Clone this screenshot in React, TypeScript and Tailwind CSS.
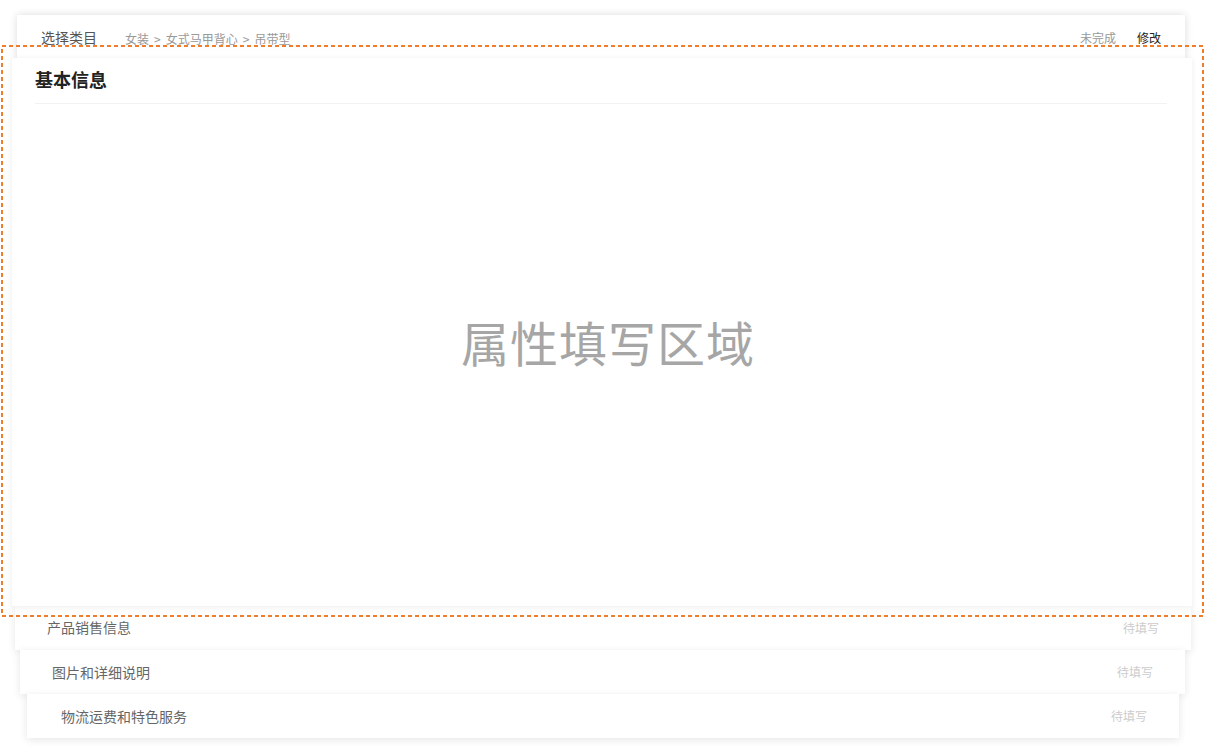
export default function App() {
  const font = { fontFamily: '"Noto Sans CJK SC", "Noto Sans", sans-serif' }
  const steps = [
    { title: '产品销售信息', box: 'ml-[15px] w-[1176px] h-[45px] mt-[-12px] pl-[32px]' },
    { title: '图片和详细说明', box: 'ml-[20px] w-[1165px] h-[44px] pl-[32px]' },
    { title: '物流运费和特色服务', box: 'ml-[27px] w-[1152px] h-[44px] pl-[34px]' },
  ]

  return (
    <div className="w-[1205px] h-[753px] bg-white pt-[15px] overflow-hidden" style={font}>
      {/* 选择类目 */}
      <div className="ml-[17px] w-[1168px] h-[45px] bg-white shadow-[0_0_8px_rgba(0,0,0,0.14)] flex items-center px-[24px]">
        <span className="text-[14px] text-[#555]">选择类目</span>
        <span className="ml-[28px] mt-[3px] text-[12px] text-[#999] flex items-center">
          女装<span className="mx-[5px]">&gt;</span>女式马甲背心<span className="mx-[5px]">&gt;</span>吊带型
        </span>
        <span className="ml-auto text-[12px] text-[#999]">未完成</span>
        <span className="ml-[21px] text-[12px] text-[#222]">修改</span>
      </div>

      {/* 基本信息 */}
      <div className="relative z-10 mt-[-15px] ml-[1px] w-[1203px] h-[572px] pt-[13px] pl-[11px]">
        <svg className="absolute inset-0 pointer-events-none" width="1203" height="572">
          <rect x="1" y="1" width="1201" height="570" fill="none" stroke="#ef7d2c" strokeWidth="2" strokeDasharray="4 3" />
        </svg>
        <div className="w-[1180px] h-[548px] bg-white shadow-[0_1px_6px_rgba(0,0,0,0.08)] flex flex-col px-[23px]">
          <div className="h-[46px] flex items-center border-b border-[#f2f2f2] mr-[2px] pb-[2px]">
            <span className="text-[18px] font-bold text-[#222]">基本信息</span>
          </div>
          <div className="flex-1 flex items-center justify-center pb-[28px] pl-[12px]">
            <span className="text-[48px] text-[#a6a6a6] tracking-[1px]">属性填写区域</span>
          </div>
        </div>
      </div>

      {/* 待填写 steps */}
      {steps.map((s) => (
        <div
          key={s.title}
          className={`${s.box} bg-white shadow-[0_2px_8px_rgba(0,0,0,0.1)] flex items-center justify-between pr-[32px]`}
        >
          <span className="text-[14px] text-[#666]">{s.title}</span>
          <span className="text-[12px] text-[#ccc]">待填写</span>
        </div>
      ))}
    </div>
  )
}
